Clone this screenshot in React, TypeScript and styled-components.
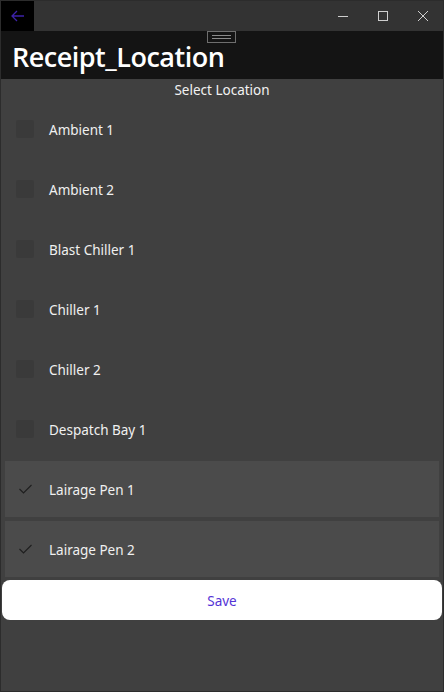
import React from "react";
import styled, { createGlobalStyle } from "styled-components";

const Global = createGlobalStyle`
  html, body { margin: 0; padding: 0; background: #404040; }
  body { font-family: "Noto Sans", "Open Sans", sans-serif; }
`;

const Window = styled.div`
  width: 444px;
  height: 692px;
  box-sizing: border-box;
  border: 1px solid #2c2c2c;
  border-top: none;
  background: #404040;
  display: flex;
  flex-direction: column;
  overflow: hidden;
`;

const TitleBar = styled.div`
  height: 31px;
  flex: none;
  display: flex;
  align-items: stretch;
  background: #333333;
  border-top: 1px solid #2c2c2c;
  box-sizing: border-box;
`;

const BackButton = styled.div`
  width: 33px;
  background: #000;
  display: flex;
  align-items: center;
  justify-content: center;
`;

const Spacer = styled.div`
  flex: 1;
`;

const CaptionButton = styled.div`
  width: 40px;
  display: flex;
  align-items: center;
  justify-content: center;
`;

const Header = styled.div`
  position: relative;
  height: 48px;
  flex: none;
  background: #141414;
  display: flex;
  align-items: center;
  padding-left: 11px;
`;

const Title = styled.h1`
  margin: 0;
  color: #ffffff;
  font-family: "Open Sans", "Noto Sans", sans-serif;
  font-weight: 600;
  font-size: 27px;
  letter-spacing: -0.5px;
  line-height: 1;
  padding-top: 2px;
`;

const Grip = styled.div`
  position: absolute;
  left: 206px;
  top: 0;
  width: 27px;
  height: 10px;
  border: 1px solid #6e6e6e;
  display: flex;
  flex-direction: column;
  justify-content: center;
  align-items: center;
  gap: 2px;
  &::before, &::after {
    content: "";
    width: 19px;
    height: 1px;
    background: #8a8a8a;
  }
`;

const Subtitle = styled.div`
  height: 19px;
  padding-top: 1px;
  flex: none;
  text-align: center;
  color: #f2f2f2;
  font-size: 13.5px;
  line-height: 20px;
`;

const List = styled.div`
  display: flex;
  flex-direction: column;
`;

const Row = styled.div<{ $selected?: boolean }>`
  height: 56px;
  margin: 2px 4px;
  display: flex;
  align-items: center;
  background: ${(p) => (p.$selected ? "#4b4b4b" : "transparent")};
`;

const Check = styled.div<{ $selected?: boolean }>`
  width: 18px;
  height: 18px;
  margin-left: 11px;
  border-radius: 2px;
  background: ${(p) => (p.$selected ? "transparent" : "#3a3a3a")};
  display: flex;
  align-items: center;
  justify-content: center;
`;

const Label = styled.span`
  margin-left: 15px;
  padding-top: 1px;
  color: #f0f0f0;
  font-size: 13.5px;
`;

const SaveButton = styled.button`
  margin: 1px 1px 0 1px;
  height: 40px;
  padding-top: 2px;
  border: none;
  border-radius: 8px;
  background: #ffffff;
  color: #5433d6;
  font-family: "Noto Sans", "Open Sans", sans-serif;
  font-size: 13.5px;
  cursor: pointer;
`;

const items = [
  { name: "Ambient 1", sel: false },
  { name: "Ambient 2", sel: false },
  { name: "Blast Chiller 1", sel: false },
  { name: "Chiller 1", sel: false },
  { name: "Chiller 2", sel: false },
  { name: "Despatch Bay 1", sel: false },
  { name: "Lairage Pen 1", sel: true },
  { name: "Lairage Pen 2", sel: true },
];

export default function App() {
  return (
    <>
      <Global />
      <Window>
        <TitleBar>
          <BackButton>
            <svg width="14" height="12" viewBox="0 0 14 12">
              <path d="M6 1 L1 6 L6 11 M1 6 H13" stroke="#3d22a8" strokeWidth="1.3" fill="none" />
            </svg>
          </BackButton>
          <Spacer />
          <CaptionButton>
            <svg width="10" height="10" viewBox="0 0 10 10">
              <path d="M0 5.5 H10" stroke="#cfcfcf" strokeWidth="1" />
            </svg>
          </CaptionButton>
          <CaptionButton>
            <svg width="10" height="10" viewBox="0 0 10 10">
              <rect x="0.5" y="0.5" width="9" height="9" stroke="#cfcfcf" strokeWidth="1" fill="none" />
            </svg>
          </CaptionButton>
          <CaptionButton>
            <svg width="10" height="10" viewBox="0 0 10 10">
              <path d="M0 0 L10 10 M10 0 L0 10" stroke="#cfcfcf" strokeWidth="1" />
            </svg>
          </CaptionButton>
        </TitleBar>
        <Header>
          <Grip />
          <Title>Receipt_Location</Title>
        </Header>
        <Subtitle>Select Location</Subtitle>
        <List>
          {items.map((it) => (
            <Row key={it.name} $selected={it.sel}>
              <Check $selected={it.sel}>
                {it.sel && (
                  <svg width="13" height="10" viewBox="0 0 13 10">
                    <path d="M0.5 5 L4.5 9 L12.5 1" stroke="#1e1e1e" strokeWidth="1.1" fill="none" />
                  </svg>
                )}
              </Check>
              <Label>{it.name}</Label>
            </Row>
          ))}
        </List>
        <SaveButton>Save</SaveButton>
      </Window>
    </>
  );
}
